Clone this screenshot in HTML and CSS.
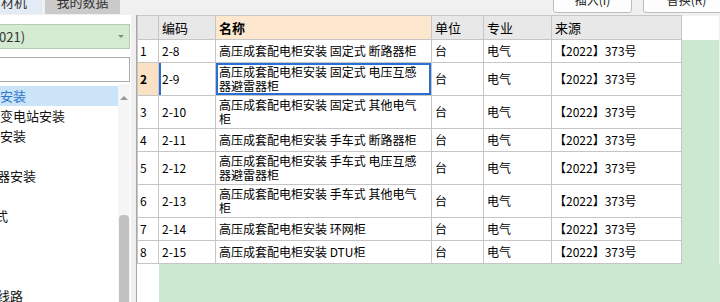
FILE: index.html
```html
<!DOCTYPE html>
<html lang="zh">
<head>
<meta charset="utf-8">
<link rel="stylesheet" href="styles.css">
</head>
<body>
<div class="topbar">
  <div class="tab tab-active">材机</div>
  <div class="tab tab-gray">我的数据</div>
  <div class="spacer"></div>
  <div class="btn">插入(I)</div>
  <div class="btn btn-last">替换(R)</div>
</div>
<div class="main">
  <div class="left">
    <div class="dropdown"><span class="dd-text">021)</span><span class="dd-arrow"></span></div>
    <div class="search"></div>
    <div class="tree">
      <ul class="tree-list">
        <li class="sel">安装</li>
        <li>变电站安装</li>
        <li>安装</li>
        <li></li>
        <li class="cut">器安装</li>
        <li></li>
        <li class="cut2">式</li>
        <li></li>
        <li></li>
        <li></li>
        <li class="cut">线路</li>
      </ul>
      <div class="vscroll">
        <span class="up-arrow"></span>
        <div class="thumb"></div>
      </div>
    </div>
  </div>
  <div class="gap"></div>
  <div class="grid">
    <table class="tbl">
      <colgroup>
        <col class="c-rn"><col class="c-code"><col class="c-name"><col class="c-unit"><col class="c-major"><col class="c-src"><col>
      </colgroup>
      <thead>
        <tr class="h">
          <th class="rn-h"></th>
          <th>编码</th>
          <th class="name-h">名称</th>
          <th>单位</th>
          <th>专业</th>
          <th>来源</th>
          <th class="filler-h"></th>
        </tr>
      </thead>
      <tbody>
        <tr class="r1"><td class="rn">1</td><td>2-8</td><td>高压成套配电柜安装 固定式 断路器柜</td><td>台</td><td>电气</td><td class="src">【2022】373号</td><td class="filler"></td></tr>
        <tr class="r2 cur"><td class="rn rn-cur">2</td><td class="code-cur">2-9</td><td class="name-cur">高压成套配电柜安装 固定式 电压互感器避雷器柜</td><td>台</td><td>电气</td><td class="src">【2022】373号</td><td class="filler"></td></tr>
        <tr class="r2"><td class="rn">3</td><td>2-10</td><td>高压成套配电柜安装 固定式 其他电气柜</td><td>台</td><td>电气</td><td class="src">【2022】373号</td><td class="filler"></td></tr>
        <tr class="r1"><td class="rn">4</td><td>2-11</td><td>高压成套配电柜安装 手车式 断路器柜</td><td>台</td><td>电气</td><td class="src">【2022】373号</td><td class="filler"></td></tr>
        <tr class="r2"><td class="rn">5</td><td>2-12</td><td>高压成套配电柜安装 手车式 电压互感器避雷器柜</td><td>台</td><td>电气</td><td class="src">【2022】373号</td><td class="filler"></td></tr>
        <tr class="r2"><td class="rn">6</td><td>2-13</td><td>高压成套配电柜安装 手车式 其他电气柜</td><td>台</td><td>电气</td><td class="src">【2022】373号</td><td class="filler"></td></tr>
        <tr class="r1"><td class="rn">7</td><td>2-14</td><td>高压成套配电柜安装 环网柜</td><td>台</td><td>电气</td><td class="src">【2022】373号</td><td class="filler"></td></tr>
        <tr class="r1"><td class="rn">8</td><td>2-15</td><td>高压成套配电柜安装 DTU柜</td><td>台</td><td>电气</td><td class="src">【2022】373号</td><td class="filler"></td></tr>
      </tbody>
    </table>
    <div class="rest">
      <div class="rest-rn"></div>
      <div class="rest-fill"></div>
    </div>
  </div>
</div>
</body>
</html>
```

FILE: styles.css
```css
* { box-sizing: border-box; }
html, body {
  margin: 0;
  padding: 0;
}
body {
  width: 720px;
  height: 302px;
  overflow: hidden;
  background: #f0f0f0;
  font-family: "Noto Sans CJK SC", "Noto Sans", sans-serif;
  font-size: 12px;
  color: #000;
}
.topbar {
  height: 15px;
  display: flex;
  overflow: hidden;
  background: #f0f0f0;
}
.tab {
  height: 24px;
  margin-top: -10px;
  line-height: 24px;
  font-size: 13px;
  color: #333;
  text-align: center;
}
.tab-active {
  width: 42px;
  background: #e3ebf4;
  text-indent: -14px;
  overflow: hidden;
  white-space: nowrap;
}
.tab-gray {
  width: 75px;
  margin-left: 3px;
  background: #cacaca;
}
.spacer { flex: 1; }
.btn {
  width: 79px;
  height: 26px;
  margin-top: -13px;
  line-height: 24px;
  text-align: center;
  font-size: 12px;
  color: #222;
  background: #fdfdfd;
  border: 1px solid #bdbdbd;
  border-radius: 3px;
}
.btn-last {
  margin-left: 11px;
  margin-right: -10px;
  width: 87px;
}
.main {
  display: flex;
  height: 287px;
}
.left {
  width: 131px;
  background: #fff;
  display: flex;
  flex-direction: column;
  padding-top: 9px;
  overflow: hidden;
}
.dropdown {
  width: 130px;
  height: 25px;
  background: #d4ead1;
  border: 1px solid #b9c9b8;
  border-left: none;
  display: flex;
  align-items: center;
  justify-content: space-between;
  padding-right: 5px;
}
.dd-text {
  font-size: 13px;
  color: #333;
  margin-left: -1px;
}
.dd-arrow {
  width: 0;
  height: 0;
  border-left: 3px solid transparent;
  border-right: 3px solid transparent;
  border-top: 3px solid #888;
}
.search {
  width: 130px;
  height: 25px;
  margin-top: 8px;
  border: 1px solid #aaaaaa;
  border-left: none;
  background: #fff;
}
.tree {
  flex: 1;
  display: flex;
  margin-top: 2px;
  overflow: hidden;
}
.tree-list {
  list-style: none;
  margin: 0;
  padding: 0;
  padding-top: 2px;
  width: 118px;
}
.tree-list li {
  height: 20px;
  line-height: 20px;
  font-size: 13px;
  color: #111;
  white-space: nowrap;
  overflow: hidden;
}
.tree-list li.sel {
  background: #cce4f7;
  color: #2a78d0;
}
.tree-list li.cut { text-indent: -3px; }
.tree-list li.cut2 { text-indent: -5px; }
.vscroll {
  width: 12px;
  background: #f5f5f5;
  display: flex;
  flex-direction: column;
  align-items: center;
  padding-top: 12px;
}
.up-arrow {
  width: 0;
  height: 0;
  border-left: 4px solid transparent;
  border-right: 4px solid transparent;
  border-bottom: 4px solid #9a9a9a;
}
.thumb {
  width: 10px;
  margin-top: 115px;
  flex: 1;
  background: #c1c1c1;
  border-radius: 4px 4px 0 0;
}
.gap {
  width: 6px;
  background: #f0f0f0;
  border-right: 1px solid #a8a8a8;
}
.grid {
  flex: 1;
  display: flex;
  flex-direction: column;
  overflow: hidden;
}
.tbl {
  border-collapse: collapse;
  table-layout: fixed;
  width: 582px;
}
.c-rn { width: 21px; }
.c-code { width: 57px; }
.c-name { width: 216px; }
.c-unit { width: 52px; }
.c-major { width: 68px; }
.c-src { width: 130px; }
.tbl th, .tbl td {
  border: 1px solid #c6c6c6;
  padding: 0 3px;
  text-align: left;
  vertical-align: middle;
  line-height: 14px;
  font-size: 12px;
  overflow: hidden;
}
.tbl th {
  font-weight: normal;
  background: #e8e8e8;
  font-size: 13px;
}
.tbl thead tr { height: 24px; }
.tbl th.name-h {
  background: #fde8cf;
  font-weight: bold;
}
.tbl th.filler-h {
  background: #fff;
  border: none;
  border-left: 1px solid #c6c6c6;
}
.tbl td { background: #fff; }
.tbl td.filler {
  background: #cde8d0;
  border: none;
  border-left: 1px solid #c6c6c6;
}
.tbl tr.r1 { height: 23px; }
.tbl tr.r2 { height: 33px; }
.tbl td.rn {
  padding-left: 2px;
  font-size: 12px;
}
.tbl td.rn-cur {
  background: #fbe1c4;
  font-weight: bold;
}
.tbl td.code-cur {
  box-shadow: inset 2px 0 0 #2a6fd6;
}
.tbl td.name-cur {
  box-shadow: inset 0 0 0 2px #2a6fd6;
}
.tbl td.src { padding-left: 2px; }
.rest {
  flex: 1;
  display: flex;
}
.rest-rn {
  width: 22px;
  background: #fff;
}
.rest-fill {
  flex: 1;
  background: #cde8d0;
}
```
